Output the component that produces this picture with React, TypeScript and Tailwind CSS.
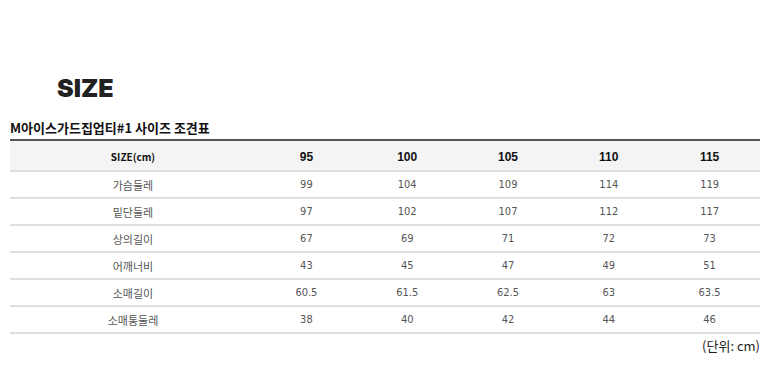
const sizes = ['95', '100', '105', '110', '115'];

const rows = [
  { label: '가슴둘레', values: ['99', '104', '109', '114', '119'] },
  { label: '밑단둘레', values: ['97', '102', '107', '112', '117'] },
  { label: '상의길이', values: ['67', '69', '71', '72', '73'] },
  { label: '어깨너비', values: ['43', '45', '47', '49', '51'] },
  { label: '소매길이', values: ['60.5', '61.5', '62.5', '63', '63.5'] },
  { label: '소매통둘레', values: ['38', '40', '42', '44', '46'] },
];

export default function App() {
  return (
    <div className="w-[770px] h-[387px] bg-white font-['Noto_Sans','Noto_Sans_CJK_KR',sans-serif]">
      <div className="px-[10px]">
        <h1 className="pt-[73px] pl-[47px] text-[25px] leading-[30px] font-black text-[#222] font-['Inter','Noto_Sans',sans-serif]">
          SIZE
        </h1>
        <h2 className="mt-[17px] text-[13px] leading-[16px] font-bold text-[#111] font-['Noto_Sans_CJK_KR',sans-serif]">
          M아이스가드집업티#1 사이즈 조견표
        </h2>
        <table className="mt-[3px] w-[750px] table-fixed border-collapse border-t-2 border-[#555]">
          <colgroup>
            <col className="w-[246px]" />
            {sizes.map((s) => (
              <col key={s} />
            ))}
          </colgroup>
          <thead>
            <tr className="h-[31px] bg-[#f4f4f4] border-b-2 border-[#dedede]">
              <th className="pt-[2px] text-[10px] font-bold text-[#111] font-['Noto_Sans_CJK_KR',sans-serif]">SIZE(cm)</th>
              {sizes.map((s) => (
                <th key={s} className="pt-[3px] text-[12px] font-bold text-[#111] font-['Liberation_Sans',sans-serif]">
                  {s}
                </th>
              ))}
            </tr>
          </thead>
          <tbody>
            {rows.map((row) => (
              <tr key={row.label} className="h-[27px] border-b-2 border-[#dedede]">
                <td className="pt-[2px] text-center text-[11px] text-[#555] font-['Noto_Sans_CJK_KR',sans-serif]">{row.label}</td>
                {row.values.map((v, i) => (
                  <td key={i} className="pt-[2px] text-center text-[11px] text-[#555] font-['DejaVu_Sans_Condensed','DejaVu_Sans',sans-serif]">
                    {v}
                  </td>
                ))}
              </tr>
            ))}
          </tbody>
        </table>
        <p className="mt-[4px] text-right text-[13px] leading-[16px] text-[#222] font-['Noto_Sans_CJK_KR',sans-serif]">
          (단위: cm)
        </p>
      </div>
    </div>
  );
}
